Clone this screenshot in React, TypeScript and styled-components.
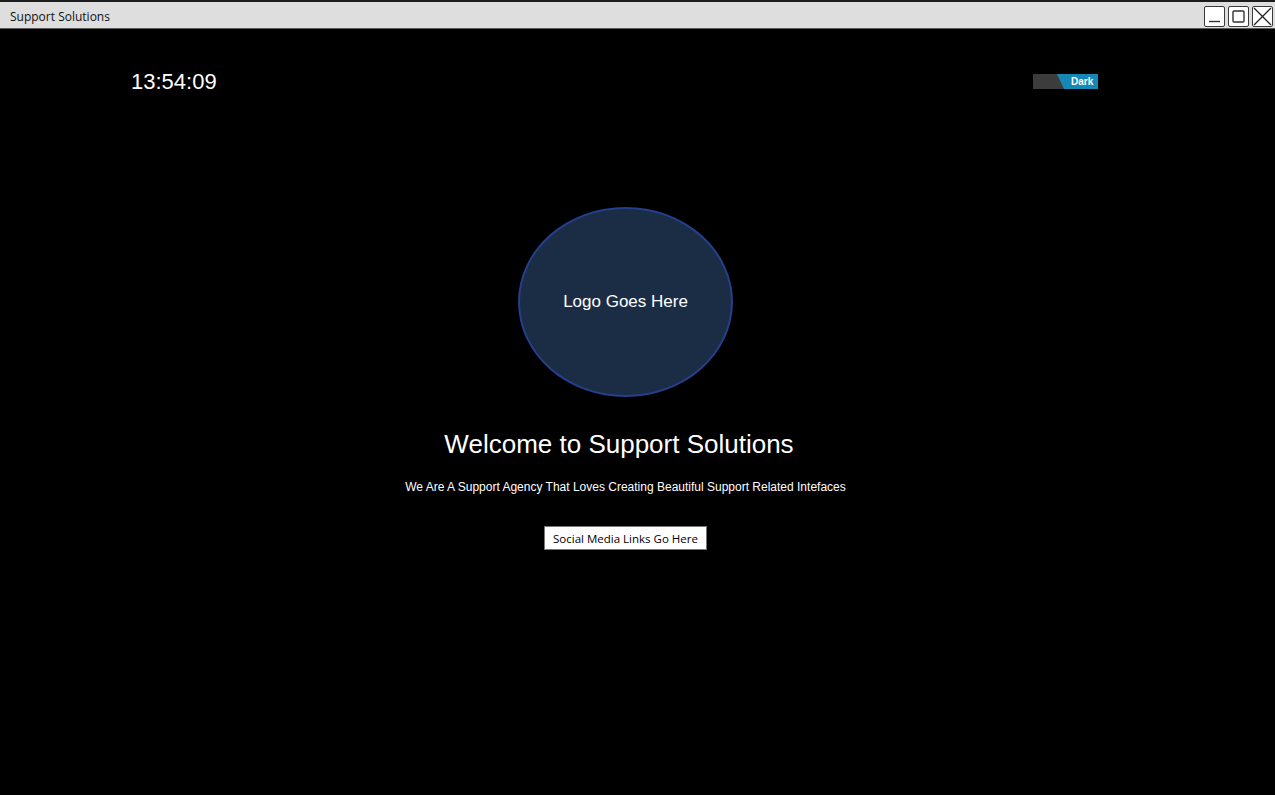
import styled, { createGlobalStyle } from 'styled-components';

const GlobalStyle = createGlobalStyle`
  html, body {
    margin: 0;
    padding: 0;
    background: #000;
  }
  body {
    font-family: 'Liberation Sans', Arial, sans-serif;
  }
`;

const time = '13:54:09';

const App = () => {
  return (
    <>
      <GlobalStyle />
      <Window>
        <TitleBar>
          <Title>Support Solutions</Title>
          <Controls>
            <WinButton aria-label="minimize">
              <svg width="13" height="13" viewBox="0 0 13 13">
                <line x1="1" y1="11.5" x2="12" y2="11.5" stroke="#333" strokeWidth="1.4" />
              </svg>
            </WinButton>
            <WinButton aria-label="maximize">
              <svg width="13" height="13" viewBox="0 0 13 13">
                <rect x="1" y="1" width="11" height="11" rx="1" fill="none" stroke="#333" strokeWidth="1.4" />
              </svg>
            </WinButton>
            <WinButton aria-label="close">
              <svg width="19" height="19" viewBox="0 0 19 19">
                <path d="M1 1 L18 18 M18 1 L1 18" stroke="#222" strokeWidth="1.3" />
              </svg>
            </WinButton>
          </Controls>
        </TitleBar>

        <Main>
          <Header>
            <Clock>{time}</Clock>
            <Toggle>
              <ToggleOn>Dark</ToggleOn>
            </Toggle>
          </Header>

          <Hero>
            <Logo>Logo Goes Here</Logo>
            <Heading>Welcome to Support Solutions</Heading>
            <Tagline>We Are A Support Agency That Loves Creating Beautiful Support Related Intefaces</Tagline>
            <SocialBox>Social Media Links Go Here</SocialBox>
          </Hero>
        </Main>
      </Window>
    </>
  );
};

export default App;

const Window = styled.div`
  display: flex;
  flex-direction: column;
  min-height: 100vh;
  background: #000;
`;

const TitleBar = styled.div`
  display: flex;
  align-items: center;
  justify-content: space-between;
  height: 26px;
  background: #dedede;
  border-top: 2px solid #1c1c1c;
  border-bottom: 1px solid #5a5a5a;
  padding: 0 2px 0 10px;
`;

const Title = styled.span`
  font-family: 'Comic Sans MS', 'Open Sans', sans-serif;
  font-size: 12px;
  color: #111;
  margin-top: 2px;
`;

const Controls = styled.div`
  display: flex;
  gap: 3px;
  margin-top: 3px;
`;

const WinButton = styled.div`
  display: flex;
  align-items: center;
  justify-content: center;
  width: 19px;
  height: 19px;
  background: #fff;
  border: 1px solid #3a3a3a;
  border-radius: 2px;
`;

const Main = styled.main`
  display: flex;
  flex-direction: column;
  padding-top: 38px;
`;

const Header = styled.div`
  display: flex;
  justify-content: space-between;
  align-items: flex-start;
  padding: 0 177px 0 131px;
`;

const Clock = styled.div`
  color: #fff;
  font-size: 22px;
  line-height: 26px;
  margin-top: 2px;
`;

const Toggle = styled.div`
  display: flex;
  justify-content: flex-end;
  width: 65px;
  height: 15px;
  margin-top: 7px;
  background: #3c3c3c;
`;

const ToggleOn = styled.span`
  width: 41px;
  background: #1688b6;
  clip-path: polygon(0 0, 100% 0, 100% 100%, 7px 100%);
  color: #fff;
  font-size: 10px;
  font-weight: bold;
  line-height: 15px;
  padding-left: 14px;
  box-sizing: border-box;
`;

const Hero = styled.section`
  display: flex;
  flex-direction: column;
  align-items: center;
  margin-top: 112px;
  padding-right: 24px;
`;

const Logo = styled.div`
  display: flex;
  align-items: center;
  justify-content: center;
  width: 215px;
  height: 190px;
  box-sizing: border-box;
  border-radius: 50%;
  background: #1a2d45;
  border: 2px solid #253f8c;
  color: #fff;
  font-size: 17px;
`;

const Heading = styled.h1`
  margin: 32px 13px 0 0;
  color: #fff;
  font-size: 26px;
  font-weight: normal;
  line-height: 30px;
`;

const Tagline = styled.p`
  margin: 21px 0 0;
  color: #fff;
  font-size: 12px;
  line-height: 14px;
`;

const SocialBox = styled.div`
  margin-top: 32px;
  width: 163px;
  height: 24px;
  box-sizing: border-box;
  display: flex;
  align-items: center;
  justify-content: center;
  background: #fff;
  border: 1px solid #777;
  color: #000;
  font-family: 'Comic Sans MS', 'Open Sans', sans-serif;
  font-size: 11.5px;
  white-space: nowrap;
`;
